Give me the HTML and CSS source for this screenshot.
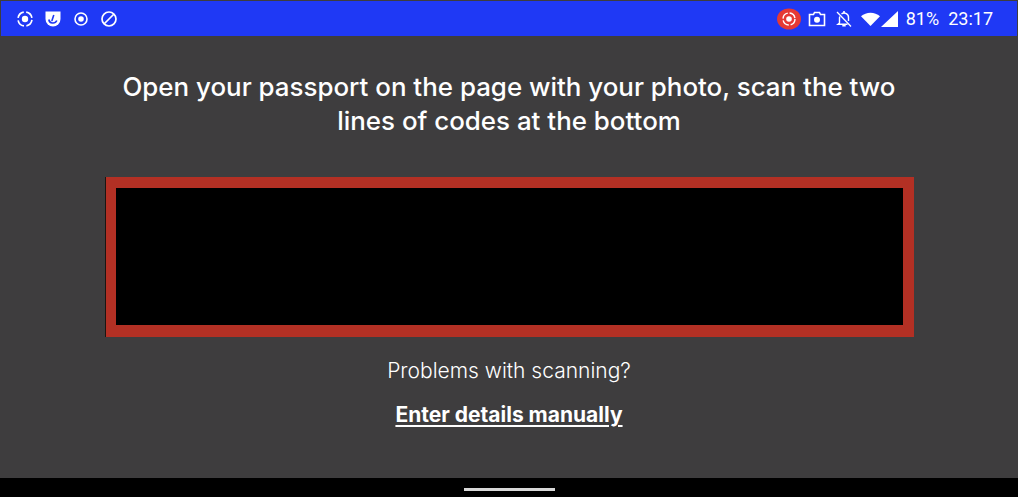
FILE: index.html
```html
<!DOCTYPE html>
<html lang="en">
<head>
    <meta charset="UTF-8">
    <meta name="viewport" content="width=device-width, initial-scale=1.0">
    <title>Scan passport</title>
    <link rel="stylesheet" href="styles.css">
</head>
<body>
    <div id="status-bar">
        <div class="status-left">
            <svg class="icon" viewBox="0 0 18 18"><circle cx="9" cy="9" r="3.2" fill="#fff"/><circle cx="9" cy="9" r="7" fill="none" stroke="#fff" stroke-width="1.7" stroke-dasharray="8.5 2.5" stroke-dashoffset="-1"/></svg>
            <svg class="icon" viewBox="0 0 18 18"><path d="M1.5 1.5h15v7.5a7.5 7.5 0 0 1-15 0z" fill="#fff"/><path d="M4.8 9.5a4.2 4.2 0 0 0 8 1M7.8 11l2-6" fill="none" stroke="#1f39f5" stroke-width="1.6"/></svg>
            <svg class="icon" viewBox="0 0 18 18"><circle cx="9" cy="9" r="2.8" fill="#fff"/><circle cx="9" cy="9" r="6" fill="none" stroke="#fff" stroke-width="1.6"/></svg>
            <svg class="icon" viewBox="0 0 18 18"><circle cx="9" cy="9" r="7" fill="none" stroke="#fff" stroke-width="1.7"/><path d="M4 14 14 4" stroke="#fff" stroke-width="1.7"/></svg>
        </div>
        <div class="status-right">
            <svg class="icon-rec" viewBox="0 0 24 22"><ellipse cx="12" cy="11" rx="12" ry="10.5" fill="#e53935"/><circle cx="12" cy="11" r="2.8" fill="#fff"/><circle cx="12" cy="11" r="6" fill="none" stroke="#fff" stroke-width="1.4" stroke-dasharray="7.5 1.9"/></svg>
            <svg class="icon icon-camera" viewBox="0 0 18 18"><path d="M1.5 4.5h4l1-2h5l1 2h4v11h-15z" fill="none" stroke="#fff" stroke-width="1.6"/><circle cx="9" cy="9.7" r="3" fill="#fff"/></svg>
            <svg class="icon icon-bell" viewBox="0 0 18 18"><path d="M4.8 6.5c-.2.6-.3 1.300-.3 2v4.500L3 14.200h9.500M6.500 3.800A4.500 4.500 0 0 1 13.500 8v3" fill="none" stroke="#fff" stroke-width="1.4"/><path d="M9 1v2M7.300 15.800h3.400" stroke="#fff" stroke-width="1.6"/><path d="M2 2l14 14.500" stroke="#fff" stroke-width="1.300"/></svg>
            <svg class="icon-wifi" viewBox="0 0 19 14"><path d="M0 4.200a14.500 14.500 0 0 1 19 0L9.500 14z" fill="#fff"/></svg>
            <svg class="icon-signal" viewBox="0 0 17 16"><path d="M17 0v16H0z" fill="#fff"/></svg>
            <span class="battery">81%</span>
            <span class="clock">23:17</span>
        </div>
    </div>

    <div id="scan-screen">
        <h1>Open your passport on the page with your photo, scan the two lines of codes at the bottom</h1>
        <div class="scan-frame"></div>
        <p class="problems">Problems with scanning?</p>
        <a class="manual-link" href="#">Enter details manually</a>
    </div>

    <div id="nav-bar">
        <div class="nav-handle"></div>
    </div>
</body>
</html>
```

FILE: styles.css
```css
* {
    box-sizing: border-box;
}
body {
    margin: 0;
    width: 1018px;
    height: 497px;
    display: flex;
    flex-direction: column;
    overflow: hidden;
    background: #3e3d3e;
    font-family: Inter, "Liberation Sans", sans-serif;
    color: #fff;
}
#status-bar {
    height: 35px;
    flex: none;
    display: flex;
    justify-content: space-between;
    align-items: center;
    margin: 1px 1px 1px;
    padding: 0 24px 0 15px;
    background: #1f39f5;
    font-family: Roboto, sans-serif;
    font-size: 18px;
}
.status-left {
    display: flex;
    align-items: center;
    gap: 10px;
}
.status-right {
    display: flex;
    align-items: center;
}
.icon {
    width: 18px;
    height: 18px;
    display: block;
}
.icon-rec {
    width: 24px;
    height: 22px;
    display: block;
    margin-right: 7px;
}
.icon-camera {
    margin-right: 9px;
}
.icon-bell {
    margin-right: 8px;
}
.icon-wifi {
    width: 19px;
    height: 14px;
    display: block;
    margin-right: 1px;
}
.icon-signal {
    width: 17px;
    height: 16px;
    display: block;
    margin-right: 8px;
}
.battery {
    margin-right: 9px;
}
#scan-screen {
    flex: 1;
    display: flex;
    flex-direction: column;
    align-items: center;
    padding-top: 33px;
}
h1 {
    margin: 0;
    width: 820px;
    font-size: 25.9px;
    font-weight: 450;
    line-height: 34px;
    text-align: center;
}
.scan-frame {
    width: 808px;
    height: 160px;
    margin: 39px 0 0 1px;
    background: #000;
    border: 11px solid #b33024;
    border-left-width: 10px;
    border-bottom-width: 12px;
    box-shadow: -1px 0 0 #1c1512;
}
.problems {
    margin: 21px 0 0;
    font-size: 21px;
    font-weight: 300;
    line-height: 26px;
}
.manual-link {
    margin-top: 18px;
    font-size: 21px;
    font-weight: 700;
    line-height: 26px;
    color: #fff;
    text-decoration: underline;
    text-underline-offset: 3px;
}
#nav-bar {
    height: 19px;
    flex: none;
    background: #000;
    display: flex;
    justify-content: center;
    padding-top: 10px;
}
.nav-handle {
    width: 91px;
    height: 3px;
    background: #d8d8d8;
}
```
